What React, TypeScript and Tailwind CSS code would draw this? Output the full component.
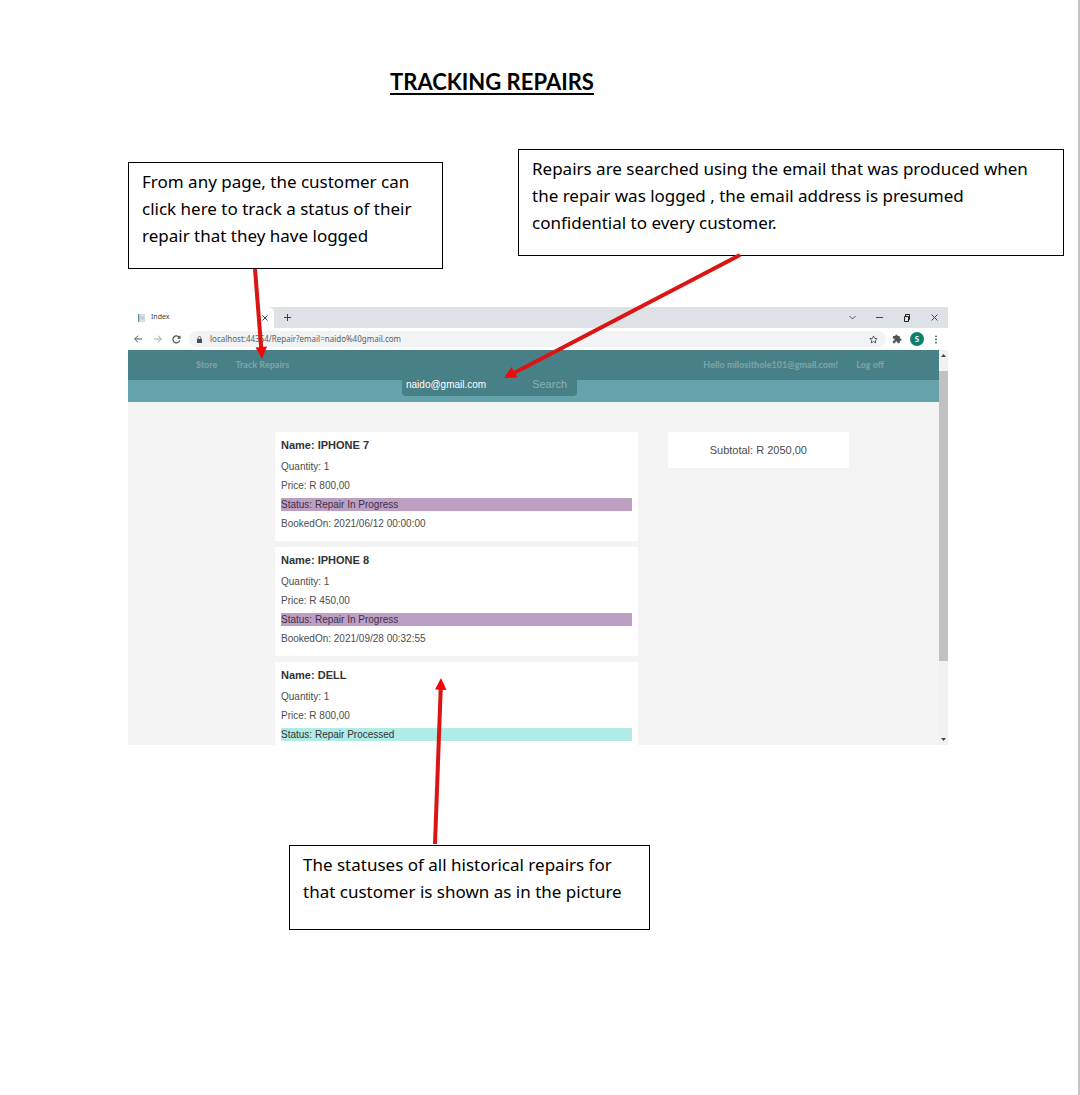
import type { ReactNode } from 'react';

type Repair = {
  name: string;
  quantity: number;
  price: string;
  status: string;
  done: boolean;
  bookedOn?: string;
};

const repairs: Repair[] = [
  { name: 'IPHONE 7', quantity: 1, price: 'R 800,00', status: 'Repair In Progress', done: false, bookedOn: '2021/06/12 00:00:00' },
  { name: 'IPHONE 8', quantity: 1, price: 'R 450,00', status: 'Repair In Progress', done: false, bookedOn: '2021/09/28 00:32:55' },
  { name: 'DELL', quantity: 1, price: 'R 800,00', status: 'Repair Processed', done: true },
];

function Callout({ className, children }: { className: string; children: ReactNode }) {
  return (
    <div className={`border border-black bg-white pt-[5px] pl-[13px] font-['Noto_Sans',sans-serif] text-[17px] leading-[27px] text-black ${className}`}>
      {children}
    </div>
  );
}

function TabStrip() {
  return (
    <div className="flex h-[21px] items-stretch bg-[#dee1e6] text-[#3c4043]">
      <div className="flex w-[146px] items-center rounded-tr-md bg-white pr-1.5 pl-2.5">
        <svg width="7" height="8" viewBox="0 0 7 8" aria-hidden="true">
          <path d="M0 0h1.5v8H0z" fill="#5a9aa5" />
          <path d="M2.5 .5h4v7h-4z" fill="#e5eaec" stroke="#b8c6ca" strokeWidth=".6" />
          <path d="M3 3h3M3 5h3" stroke="#87989f" strokeWidth=".6" />
        </svg>
        <span className="ml-1.5 grow font-['Noto_Sans',sans-serif] text-[7px]">Index</span>
        <button type="button" aria-label="Close tab">
          <svg width="6" height="6" viewBox="0 0 6 6" stroke="#3c4043" aria-hidden="true"><path d="M.5 .5l5 5M5.500 .5l-5 5" /></svg>
        </button>
      </div>
      <button type="button" aria-label="New tab" className="ml-2.5">
        <svg width="7" height="7" viewBox="0 0 7 7" stroke="#3c4043" aria-hidden="true"><path d="M3.500 0v7M0 3.500h7" /></svg>
      </button>
      <div className="ml-auto flex items-center gap-5 pr-2.5">
        <button type="button" aria-label="Search tabs">
          <svg width="7" height="5" viewBox="0 0 7 5" fill="none" stroke="#555" aria-hidden="true"><path d="M.5 1l3 3 3-3" /></svg>
        </button>
        <button type="button" aria-label="Minimize">
          <svg width="7" height="3" viewBox="0 0 7 3" stroke="#444" aria-hidden="true"><path d="M0 1.500h7" /></svg>
        </button>
        <button type="button" aria-label="Restore">
          <svg width="8" height="8" viewBox="0 0 8 8" fill="none" stroke="#222" aria-hidden="true"><path d="M1.500 2.500h4v5h-4zM2.500 2.500v-2h4v5h-1" /></svg>
        </button>
        <button type="button" aria-label="Close window">
          <svg width="7" height="7" viewBox="0 0 7 7" stroke="#444" aria-hidden="true"><path d="M.5 .5l6 6M6.500 .5l-6 6" /></svg>
        </button>
      </div>
    </div>
  );
}

function Toolbar() {
  return (
    <div className="flex h-[22px] items-center bg-white pr-2.5 pl-1.5">
      <button type="button" aria-label="Back">
        <svg width="8" height="8" viewBox="0 0 8 8" fill="none" stroke="#50555a" aria-hidden="true"><path d="M8 4H.7M4 .7L.7 4 4 7.300" /></svg>
      </button>
      <button type="button" aria-label="Forward" className="ml-3">
        <svg width="8" height="8" viewBox="0 0 8 8" fill="none" stroke="#a0a3a6" aria-hidden="true"><path d="M0 4h7.300M4 .7L7.300 4 4 7.300" /></svg>
      </button>
      <button type="button" aria-label="Reload" className="ml-2.5">
        <svg width="9" height="9" viewBox="0 0 9 9" fill="none" stroke="#45494d" strokeWidth="1.200" aria-hidden="true">
          <path d="M7.800 5.300A3.500 3.500 0 1 1 7.200 2.200" />
          <path d="M8.500 .3v3.400H5.100z" fill="#45494d" stroke="none" />
        </svg>
      </button>
      <div className="ml-2 flex h-4 grow items-center rounded-full bg-[#f1f3f4] px-2">
        <svg width="5" height="7" viewBox="0 0 5 7" aria-hidden="true">
          <path d="M0 3h5v4H0z" fill="#4a4e52" />
          <path d="M1.200 3V1.800a1.300 1.300 0 0 1 2.600 0V3" fill="none" stroke="#4a4e52" strokeWidth=".8" />
        </svg>
        <input
          type="text"
          aria-label="Address"
          defaultValue="localhost:44354/Repair?email=naido%40gmail.com"
          className="ml-2 h-3 min-w-0 grow bg-transparent font-['Noto_Sans',sans-serif] text-[8px] leading-3 text-[#5c6064] outline-none"
        />
        <button type="button" aria-label="Bookmark">
          <svg width="9" height="9" viewBox="0 0 24 24" fill="none" stroke="#4a4e52" strokeWidth="2.400" aria-hidden="true">
            <path d="M12 2.500l2.900 6.300 6.900.8-5.100 4.700 1.400 6.800L12 17.700l-6.100 3.400 1.400-6.800-5.100-4.700 6.900-.8z" />
          </svg>
        </button>
      </div>
      <button type="button" aria-label="Extensions" className="ml-1.5">
        <svg width="10" height="10" viewBox="0 0 24 24" fill="#4f5559" aria-hidden="true">
          <path d="M20.500 11H19V7a2 2 0 0 0-2-2h-4V3.500a2.500 2.500 0 0 0-5 0V5H4a2 2 0 0 0-2 2v3.800h1.500a2.700 2.700 0 0 1 0 5.400H2V20a2 2 0 0 0 2 2h3.800v-1.500a2.700 2.700 0 0 1 5.400 0V22H17a2 2 0 0 0 2-2v-4h1.500a2.500 2.500 0 0 0 0-5z" />
        </svg>
      </button>
      <button type="button" aria-label="Profile" className="ml-2 flex size-[14px] items-center justify-center rounded-full bg-[#0d806d] text-[8px] leading-none font-bold text-white">
        S
      </button>
      <button type="button" aria-label="Menu" className="ml-2.5">
        <svg width="4" height="9" viewBox="0 0 4 9" fill="#4f5559" aria-hidden="true">
          <circle cx="2" cy="1.300" r=".9" /><circle cx="2" cy="4.500" r=".9" /><circle cx="2" cy="7.700" r=".9" />
        </svg>
      </button>
    </div>
  );
}

function RepairCard({ repair }: { repair: Repair }) {
  return (
    <article className="h-[109px] bg-white px-1.5 pt-1.5 text-[10px] leading-[13px] text-[#4d4d4d]">
      <h2 className="mb-2 text-[11px] leading-[14px] font-bold text-[#333]">Name: {repair.name}</h2>
      <div className="flex flex-col gap-1.5">
        <p>Quantity: {repair.quantity}</p>
        <p>Price: {repair.price}</p>
        <p className={repair.done ? 'bg-[#b0ebe6] text-[#333]' : 'bg-[#bd9fc3] text-[#40304a]'}>Status: {repair.status}</p>
        {repair.bookedOn && <p>BookedOn: {repair.bookedOn}</p>}
      </div>
    </article>
  );
}

function RepairPage() {
  return (
    <div className="flex h-[395px] overflow-hidden bg-[#f4f4f4] font-['Liberation_Sans',Arial,sans-serif]">
      <div className="min-w-0 grow">
        <nav className="flex h-[30px] items-center bg-[#478087] pr-[55px] pl-[68px] font-['Lato',sans-serif] text-[9px] font-black text-[#7ba3a6]">
          <a href="#store">Store</a>
          <a href="#track" className="ml-[18px]">Track Repairs</a>
          <a href="#account" className="ml-auto">Hello milosithole101@gmail.com!</a>
          <a href="#logoff" className="ml-[18px]">Log off</a>
        </nav>
        <div className="flex h-[22px] justify-center bg-[#64a3ab] pr-[88px]">
          <form className="-mt-2 flex h-6 w-[175px] items-center rounded bg-[#478087] px-1" onSubmit={(e) => e.preventDefault()}>
            <input type="email" aria-label="Customer email" defaultValue="naido@gmail.com" className="w-0 grow bg-transparent text-[10px] text-white outline-none" />
            <button type="submit" className="mr-1.5 text-[11px] text-[#8db0b4]">Search</button>
          </form>
        </div>
        <div className="flex items-start gap-[30px] pt-[30px] pr-[90px] pl-[147px]">
          <div className="flex grow-2 basis-0 flex-col gap-1.5">
            {repairs.map((repair) => <RepairCard key={repair.name} repair={repair} />)}
          </div>
          <div className="grow basis-0 bg-white py-2.5 text-center text-[11px] leading-4 text-[#4d4d4d]">Subtotal: R 2050,00</div>
        </div>
      </div>
      <div className="flex w-[9px] shrink-0 flex-col items-center justify-between bg-[#f1f1f1] py-1" aria-hidden="true">
        <svg width="5" height="3" viewBox="0 0 5 3" fill="#444"><path d="M0 3L2.500 0 5 3z" /></svg>
        <div className="mt-3.5 mb-auto h-[290px] w-full bg-[#c1c1c1]" />
        <svg width="5" height="3" viewBox="0 0 5 3" fill="#444"><path d="M0 0l2.500 3L5 0z" /></svg>
      </div>
    </div>
  );
}

function Arrows() {
  return (
    <svg className="pointer-events-none absolute top-0 left-0" width="1078" height="1095" viewBox="0 0 1078 1095" aria-hidden="true">
      <g stroke="#dc1414" strokeWidth="4">
        <path d="M255 269L261.300 349" />
        <path d="M740 255L514 373" />
        <path d="M435 844L440.700 689" />
      </g>
      <g fill="#f20808">
        <path d="M262 359L255.500 347.500L267 346.500z" />
        <path d="M504 378L511.500 367L517.500 377.500z" />
        <path d="M441 678L446.500 690L435 689.500z" />
      </g>
    </svg>
  );
}

export default function App() {
  return (
    <main className="relative min-h-screen border-r-2 border-[#c3c3c3] bg-white pt-[67px] pr-3.5 pl-32 font-['Lato',sans-serif]">
      <h1 className="mr-[208px] text-center text-[22px] leading-[30px] font-bold text-black underline decoration-2 underline-offset-[3px]">
        TRACKING REPAIRS
      </h1>
      <div className="mt-[52px] flex items-start justify-between gap-6">
        <Callout className="mt-[13px] w-[315px] pb-[19px]">
          From any page, the customer can<br />click here to track a status of their<br />repair that they have logged
        </Callout>
        <Callout className="w-[546px] pb-[19px]">
          Repairs are searched using the email that was produced when<br />the repair was logged , the email address is presumed<br />confidential to every customer.
        </Callout>
      </div>
      <section className="mt-[38px] mr-[116px]">
        <TabStrip />
        <Toolbar />
        <RepairPage />
      </section>
      <Callout className="mt-[100px] ml-[161px] w-[361px] pb-6">
        The statuses of all historical repairs for<br />that customer is shown as in the picture
      </Callout>
      <Arrows />
    </main>
  );
}
